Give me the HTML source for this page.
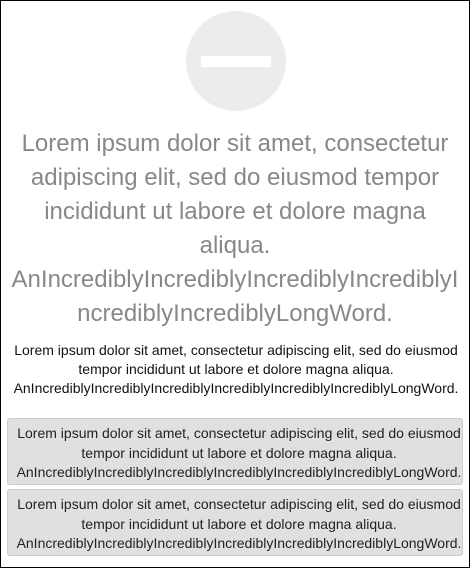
<!DOCTYPE html>
<html><head><style>
html,body{margin:0;padding:0}
body{width:470px;height:568px;box-sizing:border-box;border:1px solid #000;font-family:"Liberation Sans",sans-serif;position:relative;overflow:hidden;background:#fff}
.c{position:absolute;left:185px;top:10px;width:100px;height:100px;border-radius:50%;background:#ebeced}
.bar{position:absolute;left:200px;top:55px;width:70px;height:11px;background:#fff}
.big{position:absolute;left:0;top:126px;width:468px;text-align:center;font-size:24px;line-height:34px;color:#888;white-space:nowrap}
.sm{position:absolute;left:6px;top:340px;width:458px;text-align:center;font-size:14px;line-height:19px;color:#111}
.box{position:absolute;left:6px;width:456px;height:67px;background:#dfe0e2;border:1px solid #cbcccd;border-radius:3px;text-align:center;font-size:14px;line-height:19.5px;color:#222;padding-top:5px;box-sizing:border-box;padding-left:8px;white-space:nowrap}
</style></head><body>
<div class="c"></div><div class="bar"></div>
<div class="big">Lorem ipsum dolor sit amet, consectetur<br>adipiscing elit, sed do eiusmod tempor<br>incididunt ut labore et dolore magna<br>aliqua.<br>AnIncrediblyIncrediblyIncrediblyIncrediblyI<br>ncrediblyIncrediblyLongWord.</div>
<div class="sm">Lorem ipsum dolor sit amet, consectetur adipiscing elit, sed do eiusmod<br>tempor incididunt ut labore et dolore magna aliqua.<br>AnIncrediblyIncrediblyIncrediblyIncrediblyIncrediblyIncrediblyLongWord.</div>
<div class="box" style="top:417px">Lorem ipsum dolor sit amet, consectetur adipiscing elit, sed do eiusmod<br>tempor incididunt ut labore et dolore magna aliqua.<br>AnIncrediblyIncrediblyIncrediblyIncrediblyIncrediblyIncrediblyLongWord.</div>
<div class="box" style="top:488px">Lorem ipsum dolor sit amet, consectetur adipiscing elit, sed do eiusmod<br>tempor incididunt ut labore et dolore magna aliqua.<br>AnIncrediblyIncrediblyIncrediblyIncrediblyIncrediblyIncrediblyLongWord.</div>
</body></html>
